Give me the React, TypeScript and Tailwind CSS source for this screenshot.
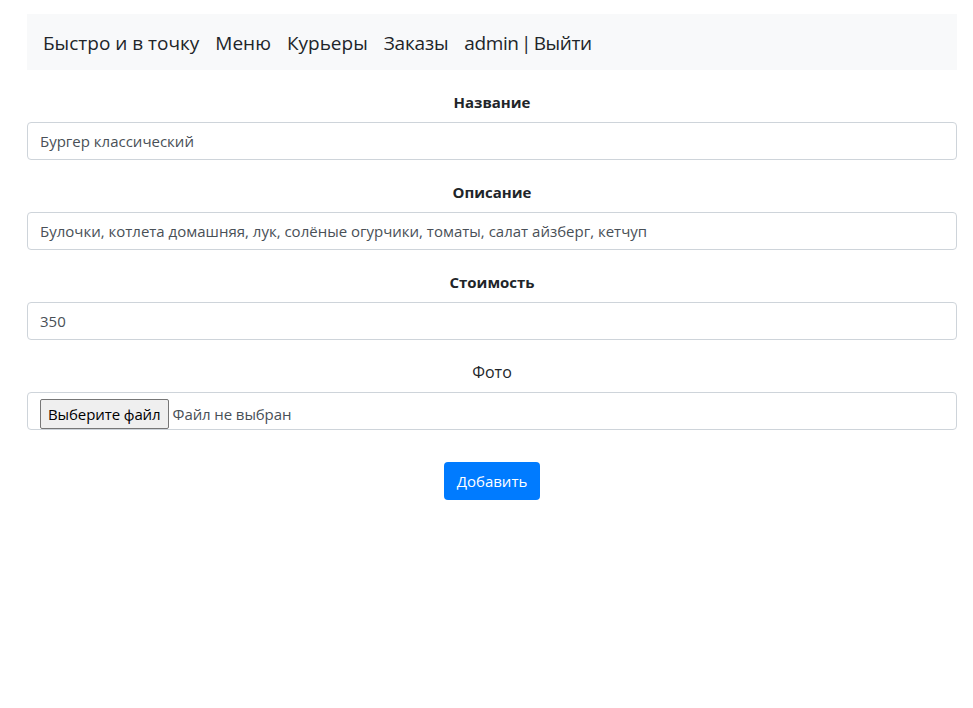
import React from "react";

const font = { fontFamily: '"Open Sans", "Noto Sans", sans-serif' };

function Field({ label, value, bold = true }: { label: string; value: string; bold?: boolean }) {
  return (
    <div className="mb-5 flex flex-col">
      <label className={`mb-2 h-6 text-center leading-6 text-[#212529] ${bold ? "text-[15px] font-bold" : "text-[16px]"}`}>{label}</label>
      <div className="flex h-[38px] items-center rounded border border-[#ced4da] bg-white px-3 text-[15px] text-[#495057]">
        {value}
      </div>
    </div>
  );
}

export default function App() {
  return (
    <div className="min-h-[708px] bg-white pl-[27px] pr-[16px] pt-[14px]" style={font}>
      <nav className="flex h-14 items-center gap-4 bg-[#f8f9fa] px-4 pt-[2px] text-[19px] text-[#212529]">
        <span>Быстро и в точку</span>
        <span>Меню</span>
        <span>Курьеры</span>
        <span className="tracking-[-0.2px]">Заказы</span>
        <span className="tracking-[-0.4px] [word-spacing:-2px]">admin | Выйти</span>
      </nav>
      <div className="pt-5">
        <Field label="Название" value="Бургер классический" />
        <Field label="Описание" value="Булочки, котлета домашняя, лук, солёные огурчики, томаты, салат айзберг, кетчуп" />
        <Field label="Стоимость" value="350" />
        <div className="mb-5 flex flex-col">
          <label className="mb-2 h-6 text-center text-[16px] leading-6 text-[#212529]">Фото</label>
          <div className="flex h-[38px] items-end rounded border border-[#ced4da] bg-white pl-3 pb-0">
            <span className="flex h-[30px] items-center rounded-[2px] border border-[#767676] bg-[#efefef] px-[7px] text-[15px] tracking-[-0.1px] text-black">
              Выберите файл
            </span>
            <span className="ml-1 flex h-[30px] items-center text-[15px] tracking-[-0.1px] text-[#495057]">Файл не выбран</span>
          </div>
        </div>
        <div className="flex justify-center pt-3">
          <button className="h-[38px] rounded bg-[#007bff] px-[13px] text-[15px] text-white">Добавить</button>
        </div>
      </div>
    </div>
  );
}
